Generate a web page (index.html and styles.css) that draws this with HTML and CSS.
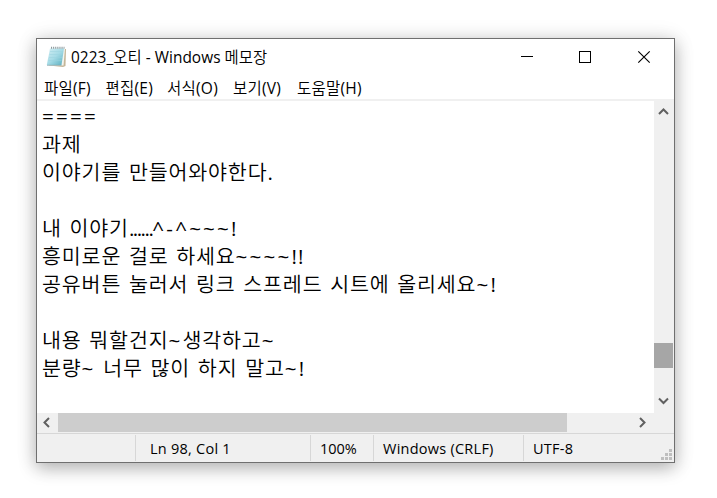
FILE: index.html
```
<!DOCTYPE html>
<html lang="ko">
<head>
<meta charset="utf-8">
<title>0223_오티 - Windows 메모장</title>
<link rel="stylesheet" href="styles.css">
</head>
<body>
<main class="window">
  <header class="titlebar">
    <svg class="app-icon" width="22" height="22" viewBox="0 0 22 22">
      <defs><linearGradient id="pad" x1="0" y1="0" x2="1" y2="1"><stop offset="0" stop-color="#d4eef4"/><stop offset=".5" stop-color="#a5dbe6"/><stop offset="1" stop-color="#58aebf"/></linearGradient></defs>
      <path d="M5.5 3H20L19.5 20L17 21L3 19.5Z" fill="#c4b699"/>
      <path d="M5 2.5H19L17.5 19.5H2.5Z" fill="#f3f5ef"/>
      <path d="M4 2.5H18L15.5 19H.8Z" fill="url(#pad)"/>
      <path d="M4 5.5H17M3.5 8.5H16.5M3 11.5H16M2.5 14.5H15.5" stroke="#9bd3df" stroke-width=".5"/>
      <path d="M5 1.8H18.5" stroke="#8b989c" stroke-width="2" stroke-dasharray="1.1 1"/>
      <path d="M1 19.3H15.5" stroke="#8aa9b0" stroke-width=".8"/>
    </svg>
    <h1 class="title">0223_오티 - Windows 메모장</h1>
    <div class="controls">
      <svg width="58" height="36"><path d="M14 17.5H26" stroke="#000"/></svg>
      <svg width="59" height="36"><rect x="14.5" y="12.5" width="11" height="11" fill="none" stroke="#000"/></svg>
      <svg width="50" height="36"><path d="M14.3 12.3L25.7 23.7M25.7 12.3L14.3 23.7" stroke="#000" stroke-width="1.15"/></svg>
    </div>
  </header>
  <nav class="menu"><span>파일(F)</span><span>편집(E)</span><span>서식(O)</span><span>보기(V)</span><span>도움말(H)</span></nav>
  <section class="editor">
    <div class="text">
      <p><span class="sym">====</span></p>
      <p>과제</p>
      <p>이야기를 만들어와야한다<span class="sym">.</span></p>
      <p></p>
      <p>내 이야기<span class="dots">......</span><span class="sym">^-^~~~!</span></p>
      <p>흥미로운 걸로 하세요<span class="sym">~~~~</span><span class="bang">!!</span></p>
      <p>공유버튼 눌러서 링크 스프레드 시트에 올리세요<span class="sym">~!</span></p>
      <p></p>
      <p>내용 뭐할건지<span class="sym">~</span>생각하고<span class="sym">~</span></p>
      <p>분량<span class="sym">~</span> 너무 많이 하지 말고<span class="sym">~!</span></p>
    </div>
    <div class="vscroll">
      <svg width="19" height="22"><path d="M5 13L9.5 8.5L14 13" fill="none" stroke="#606060" stroke-width="2"/></svg>
      <div class="vthumb"></div>
      <svg class="down" width="19" height="22"><path d="M5 8.5L9.5 13L14 8.5" fill="none" stroke="#606060" stroke-width="2"/></svg>
    </div>
  </section>
  <div class="hscroll">
    <svg width="21" height="19"><path d="M12 5L7.5 9.5L12 14" fill="none" stroke="#606060" stroke-width="2"/></svg>
    <div class="hthumb"></div>
    <svg class="right" width="20" height="19"><path d="M7 5L11.5 9.5L7 14" fill="none" stroke="#606060" stroke-width="2"/></svg>
  </div>
  <footer class="status">
    <span class="cell blank"></span><span class="cell position">Ln 98, Col 1</span><span class="cell zoom">100%</span><span class="cell ending">Windows (CRLF)</span><span class="encoding">UTF-8</span>
    <svg class="grip" width="12" height="12" fill="#bfbfbf"><path d="M8 0h3v3h-3zM4 4h3v3h-3zM8 4h3v3h-3zM0 8h3v3h-3zM4 8h3v3h-3zM8 8h3v3h-3z"/></svg>
  </footer>
</main>
</body>
</html>
```
FILE: styles.css
```
* { box-sizing: border-box; }
body {
  margin: 0;
  height: 498px;
  padding: 38px 0 0 36px;
  background: #fff;
  overflow: hidden;
  color: #000;
  font-family: "Open Sans", "Noto Sans CJK KR DemiLight", "Noto Sans CJK KR Light", "Noto Sans CJK KR", sans-serif;
}
svg { display: block; flex: none; }
.window {
  width: 639px;
  height: 425px;
  display: flex;
  flex-direction: column;
  border: 1px solid #6f6f6f;
  background: #fff;
  box-shadow: 0 5px 16px rgba(0, 0, 0, .27), 0 1px 22px rgba(0, 0, 0, .09);
}
.titlebar { height: 36px; display: flex; flex: none; align-items: center; padding-left: 9px; }
.title { margin: 2px 0 0 3px; font-size: 15.4px; font-weight: 400; line-height: 20px; letter-spacing: .05px; white-space: nowrap; }
.controls { display: flex; margin-left: auto; }
.menu { height: 24px; flex: none; display: flex; gap: 14px; padding-left: 7px; font-size: 15.5px; line-height: 26px; letter-spacing: .25px; white-space: nowrap; }
.menu span { width: 47.5px; }
.menu span:nth-child(3) { width: 52px; }
.menu span:nth-child(4) { width: 50px; }
.editor { height: 314px; flex: none; display: flex; border-top: 2px solid #f0f0f0; }
.text { flex: 1; padding: 1px 0 0 5px; font-size: 20.6px; font-weight: 300; line-height: 28px; letter-spacing: .85px; word-spacing: 1.5px; white-space: nowrap; }
.text p { margin: 0; height: 28px; }
.sym { font-weight: 400; letter-spacing: 2.2px; }
.dots { font-weight: 400; letter-spacing: -1.5px; }
.bang { font-weight: 400; letter-spacing: 1px; }
.vscroll { width: 20px; display: flex; flex-direction: column; background: #f0f0f0; }
.vthumb { width: 19px; height: 25px; margin-top: 220px; background: #a6a6a6; }
.down { margin-top: 22px; }
.hscroll { height: 20px; flex: none; display: flex; background: #f0f0f0; }
.hthumb { width: 509px; height: 19px; background: #cdcdcd; }
.right { margin-left: 66px; }
.status { height: 29px; flex: none; display: flex; align-items: flex-start; border-top: 1px solid #d7d7d7; background: #f0f0f0; font-size: 14.5px; line-height: 27px; letter-spacing: .25px; padding-top: 1px; white-space: nowrap; }
.cell { height: 26px; border-right: 1px solid #d7d7d7; }
.blank { width: 99px; }
.position { width: 175px; padding-left: 14px; }
.zoom { width: 63px; padding-left: 9px; letter-spacing: 0; }
.ending { width: 150px; padding-left: 9px; }
.encoding { padding-left: 9px; }
.grip { margin: 14px 1px 0 auto; }
```
